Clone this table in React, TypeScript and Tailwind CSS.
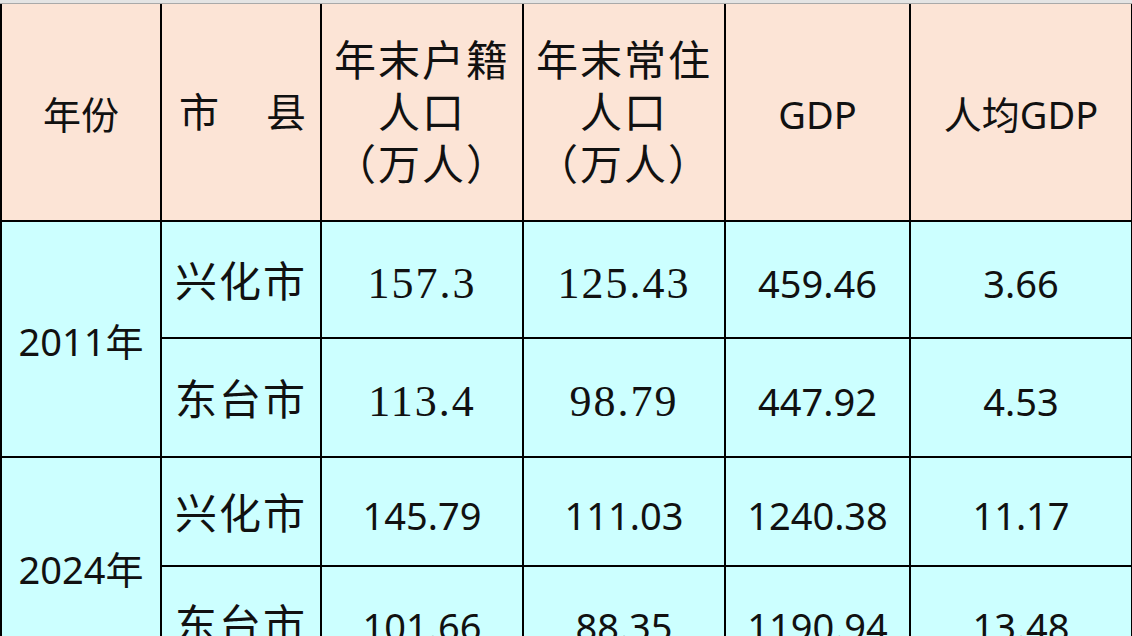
import React from "react";

const sans = "font-['Noto_Sans','Noto_Sans_CJK_SC',sans-serif]";
const song = "font-['Liberation_Serif','Noto_Sans_CJK_SC',serif]";

type Row = {
  city: string;
  huji: string;
  changzhu: string;
  gdp: string;
  perCapita: string;
  serifPop: boolean;
};

const groups: { year: string; rows: Row[]; heights: string[] }[] = [
  {
    year: "2011年",
    heights: ["h-[117px]", "h-[119px]"],
    rows: [
      { city: "兴化市", huji: "157.3", changzhu: "125.43", gdp: "459.46", perCapita: "3.66", serifPop: true },
      { city: "东台市", huji: "113.4", changzhu: "98.79", gdp: "447.92", perCapita: "4.53", serifPop: true },
    ],
  },
  {
    year: "2024年",
    heights: ["h-[109px]", "h-[112px]"],
    rows: [
      { city: "兴化市", huji: "145.79", changzhu: "111.03", gdp: "1240.38", perCapita: "11.17", serifPop: false },
      { city: "东台市", huji: "101.66", changzhu: "88.35", gdp: "1190.94", perCapita: "13.48", serifPop: false },
    ],
  },
];

function PopCell({ value, serif }: { value: string; serif: boolean }) {
  return (
    <td className="border-2 border-black text-center align-middle pt-[8px]">
      {serif ? (
        <span className={`${song} text-[44px] tracking-[2px]`}>{value}</span>
      ) : (
        <span className={`${sans} text-[38px]`}>{value}</span>
      )}
    </td>
  );
}

export default function App() {
  return (
    <div className="h-[636px] w-[1132px] overflow-hidden bg-white text-[#111]">
      <div className="h-[3px] bg-[#e4e4e4]" />
      <div className="h-px bg-[#a9a9a9]" />
      <table className="table-fixed border-collapse w-[1131px]">
        <colgroup>
          <col className="w-[160px]" />
          <col className="w-[160px]" />
          <col className="w-[202px]" />
          <col className="w-[202px]" />
          <col className="w-[185px]" />
          <col className="w-[222px]" />
        </colgroup>
        <thead>
          <tr className="h-[217px] bg-[#fce4d6]">
            <th className={`border-2 border-t-0 border-black font-normal text-[38px] pt-[4px] ${sans}`}>年份</th>
            <th className="border-2 border-t-0 border-black font-normal pt-[4px]">
              <div className={`flex justify-between pl-[17px] pr-[14px] text-[40px] ${song}`}>
                <span>市</span>
                <span>县</span>
              </div>
            </th>
            <th className={`border-2 border-t-0 border-black font-normal text-[42px] leading-[52px] tracking-[2px] pt-[4px] ${song}`}>
              年末户籍
              <br />
              人口
              <br />
              （万人）
            </th>
            <th className={`border-2 border-t-0 border-black font-normal text-[42px] leading-[52px] tracking-[2px] pt-[4px] ${song}`}>
              年末常住
              <br />
              人口
              <br />
              （万人）
            </th>
            <th className={`border-2 border-t-0 border-black font-normal text-[38px] pt-[4px] ${sans}`}>GDP</th>
            <th className={`border-2 border-t-0 border-black font-normal text-[38px] pt-[4px] ${sans}`}>人均GDP</th>
          </tr>
        </thead>
        <tbody className="bg-[#ccffff]">
          {groups.map((g) =>
            g.rows.map((r, i) => (
              <tr key={g.year + r.city} className={g.heights[i]}>
                {i === 0 && (
                  <td rowSpan={2} className={`border-2 border-black text-center align-middle text-[38px] pt-[4px] ${sans}`}>
                    {g.year}
                  </td>
                )}
                <td className={`border-2 border-black text-center align-middle text-[42px] tracking-[2px] pt-[8px] ${song}`}>
                  {r.city}
                </td>
                <PopCell value={r.huji} serif={r.serifPop} />
                <PopCell value={r.changzhu} serif={r.serifPop} />
                <td className={`border-2 border-black text-center align-middle text-[38px] pt-[8px] ${sans}`}>{r.gdp}</td>
                <td className={`border-2 border-black text-center align-middle text-[38px] pt-[8px] ${sans}`}>{r.perCapita}</td>
              </tr>
            ))
          )}
        </tbody>
      </table>
    </div>
  );
}
